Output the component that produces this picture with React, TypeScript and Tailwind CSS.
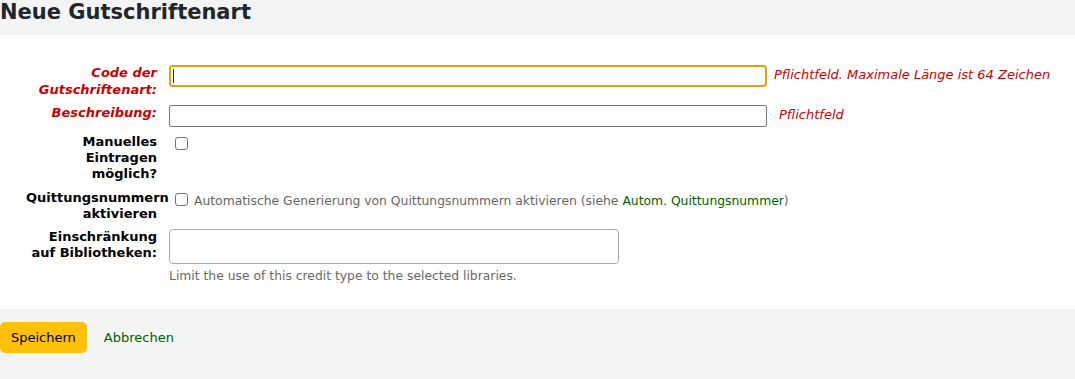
import React from "react";

const font = { fontFamily: '"DejaVu Sans", "Liberation Sans", sans-serif' };

function Label({
  children,
  red = false,
  lh = "leading-4",
}: {
  children: React.ReactNode;
  red?: boolean;
  lh?: string;
}) {
  return (
    <div className="w-[157px] shrink-0 pl-[26px]">
      <div
        className={
          "w-[131px] text-right text-[13px] font-bold " +
          lh +
          " " +
          (red ? "italic text-[#cc0000]" : "text-[#000]")
        }
      >
        {children}
      </div>
    </div>
  );
}

function Checkbox() {
  return <span className="block w-[13px] h-[13px] rounded-[3px] border border-[#767676] bg-white" />;
}

export default function App() {
  return (
    <div className="w-[1075px] h-[379px] bg-[#f3f4f4] text-[#000]" style={font}>
      <div className="h-[35px] bg-[#f3f4f4]">
        <h1 className="text-[21px] font-bold leading-[24px] text-[#222529]">Neue Gutschriftenart</h1>
      </div>
      <div className="bg-white pt-[29px] pb-[25px]">
        {/* Row 1 */}
        <div className="flex items-start mb-[7px]">
          <Label red lh="leading-[17px]">
            Code der
            <br />
            Gutschriftenart:
          </Label>
          <div className="ml-[12px] mt-[1px] w-[598px] h-[22px] rounded-[4px] border-2 border-[#e89f0a] bg-white flex items-center pl-[2px]">
            <span className="block w-[1px] h-[14px] bg-[#8b0000]" />
          </div>
          <span className="ml-[7px] mt-[3px] text-[13px] leading-4 italic text-[#cc0000]">
            Pflichtfeld. Maximale Länge ist 64 Zeichen
          </span>
        </div>
        {/* Row 2 */}
        <div className="flex items-start mb-[7px]">
          <Label red>Beschreibung:</Label>
          <div className="ml-[12px] w-[598px] h-[22px] rounded-[2px] border border-[#767676] bg-white" />
          <span className="ml-[12px] mt-[2px] text-[13px] leading-4 italic text-[#cc0000]">Pflichtfeld</span>
        </div>
        {/* Row 3 */}
        <div className="flex items-start mb-[8px]">
          <Label>
            Manuelles
            <br />
            Eintragen
            <br />
            möglich?
          </Label>
          <div className="ml-[18px] mt-[3px]">
            <Checkbox />
          </div>
        </div>
        {/* Row 4 */}
        <div className="flex items-start mb-[7px]">
          <Label>
            Quittungsnummern
            <br />
            aktivieren
          </Label>
          <div className="ml-[18px] mt-[3px]">
            <Checkbox />
          </div>
          <span className="ml-[6px] mt-[3px] text-[12.35px] leading-4 text-[#666]">
            Automatische Generierung von Quittungsnummern aktivieren (siehe{" "}
            <span className="text-[#006100]">Autom. Quittungsnummer</span>)
          </span>
        </div>
        {/* Row 5 */}
        <div className="flex items-start">
          <Label>
            Einschränkung
            <br />
            auf Bibliotheken:
          </Label>
          <div className="ml-[12px] flex flex-col">
            <div className="w-[450px] h-[35px] rounded-[4px] border border-[#aaa] bg-white" />
            <span className="mt-[4px] text-[12.35px] leading-4 text-[#696969]">
              Limit the use of this credit type to the selected libraries.
            </span>
          </div>
        </div>
      </div>
      <div className="pt-[13px] flex items-center">
        <button className="h-[31px] px-[11px] rounded-[5px] bg-[#ffc107] text-[13px] text-[#000]" style={font}>
          Speichern
        </button>
        <span className="ml-[17px] text-[13px] text-[#006100]">Abbrechen</span>
      </div>
    </div>
  );
}
